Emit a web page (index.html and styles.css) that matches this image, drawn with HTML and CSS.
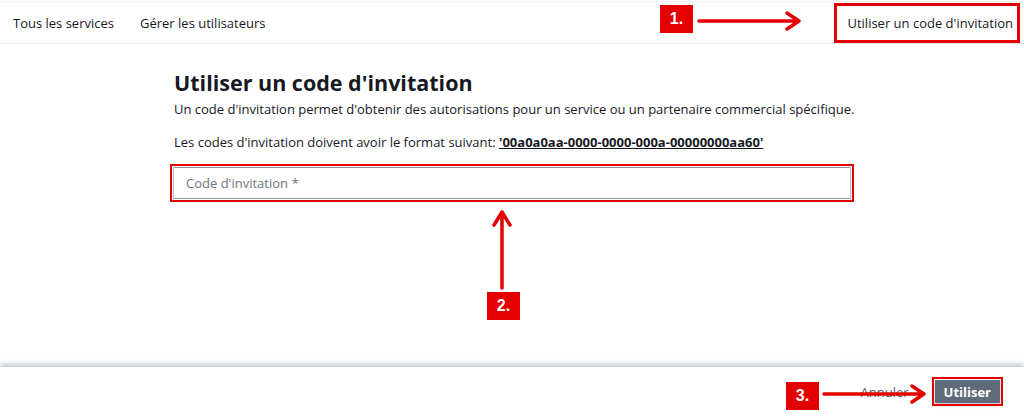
FILE: index.html
```html
<!DOCTYPE html>
<html lang="fr">
<head>
<meta charset="utf-8">
<title>Utiliser un code d'invitation</title>
<link rel="stylesheet" href="styles.css">
</head>
<body>
<header class="topnav">
  <a class="nav-link" href="#">Tous les services</a>
  <a class="nav-link" href="#">Gérer les utilisateurs</a>
  <a class="nav-link nav-link-active callout-box" href="#">Utiliser un code d'invitation</a>
</header>

<main class="content">
  <section class="panel">
    <h1 class="title">Utiliser un code d'invitation</h1>
    <p class="lead">Un code d'invitation permet d'obtenir des autorisations pour un service ou un partenaire commercial spécifique.</p>
    <p class="format">Les codes d'invitation doivent avoir le format suivant: <span class="format-code">'00a0a0aa-0000-0000-000a-00000000aa60'</span></p>
    <div class="field callout-field">
      <input class="field-input" type="text" placeholder="Code d'invitation *">
    </div>
  </section>
</main>

<footer class="actions">
  <a class="cancel" href="#">Annuler</a>
  <button class="primary callout-button" type="button">Utiliser</button>
</footer>

<!-- step markers -->
<div class="step step-1">1.</div>
<svg class="arrow arrow-1" width="112" height="24" viewBox="0 0 112 24">
  <path d="M4 12 H104 M92 4 L104 12 L92 20" />
</svg>

<svg class="arrow arrow-2" width="24" height="84" viewBox="0 0 24 84">
  <path d="M12 80 V4 M4 17 L12 4 L20 17" />
</svg>
<div class="step step-2">2.</div>

<div class="step step-3">3.</div>
<svg class="arrow arrow-3" width="112" height="24" viewBox="0 0 112 24">
  <path d="M4 12 H104 M92 4 L104 12 L92 20" />
</svg>
</body>
</html>
```

FILE: styles.css
```css
* {
  box-sizing: border-box;
}

html, body {
  height: 100%;
}

body {
  margin: 0;
  position: relative;
  display: flex;
  flex-direction: column;
  background: #ffffff;
  color: #16191f;
  font-family: "Open Sans", "Noto Sans", sans-serif;
  font-size: 13px;
}

/* top navigation */
.topnav {
  display: flex;
  align-items: center;
  height: 43px;
  margin-top: 1px;
  border-top: 1px solid #eef0f0;
  border-bottom: 1px solid #e6e9ea;
  padding-left: 13px;
  gap: 26px;
}

.nav-link {
  color: #16191f;
  text-decoration: none;
  font-size: 13px;
  line-height: 18px;
}

.nav-link-active {
  margin-left: auto;
  margin-right: 4px;
  align-self: stretch;
  display: flex;
  align-items: center;
  padding: 0 4px 0 10px;
}

.callout-box {
  border: 3px solid #e40000;
  margin-top: 1px;
  margin-bottom: 0;
}

/* main form */
.content {
  flex: 1;
  display: flex;
  justify-content: center;
}

.panel {
  width: 680px;
  padding-top: 24px;
  padding-left: 2px;
  font-size: 13px;
}

.title {
  margin: 0;
  font-size: 21.5px;
  line-height: 30px;
  font-weight: 700;
  color: #16191f;
}

.lead {
  margin: 1px 0 0;
  line-height: 20px;
  white-space: nowrap;
}

.format {
  margin: 13px 0 0;
  line-height: 20px;
  white-space: nowrap;
}

.format-code {
  font-weight: 700;
  text-decoration: underline;
}

.field {
  margin-top: 15px;
  margin-left: -1px;
  width: 678px;
}

.callout-field {
  outline: 2px solid #e40000;
  outline-offset: 1px;
}

.field-input {
  display: block;
  width: 100%;
  height: 32px;
  padding: 0 12px;
  border: 1px solid #b9c1c6;
  border-top-color: #8d99a4;
  border-bottom-color: #8d99a4;
  font-family: inherit;
  font-size: 13px;
  color: #16191f;
  background: #fff;
}

.field-input::placeholder {
  color: #6e7880;
}

/* bottom action bar */
.actions {
  height: 51px;
  display: flex;
  align-items: center;
  justify-content: flex-end;
  gap: 26px;
  padding-right: 24px;
  padding-bottom: 2px;
  background: #fff;
  box-shadow: 0 -3px 5px rgba(80, 92, 110, 0.35);
}

.cancel {
  color: #545b64;
  text-decoration: none;
  font-size: 13px;
}

.primary {
  height: 23px;
  padding: 0 9px;
  border: none;
  background: #5f6b7a;
  color: #fff;
  font-family: inherit;
  font-size: 13px;
  font-weight: 700;
  box-shadow: 0 2px 4px rgba(0, 0, 0, 0.25);
}

.callout-button {
  outline: 2px solid #e40000;
  outline-offset: 1px;
}

/* numbered step markers and arrows */
.step {
  position: absolute;
  width: 33px;
  height: 28px;
  background: #e40000;
  color: #fff;
  font-family: "Liberation Sans", Arial, sans-serif;
  font-weight: 700;
  font-size: 16px;
  line-height: 28px;
  text-align: center;
}

.step-1 { left: 660px; top: 5px; }
.step-2 { left: 487px; top: 292px; }
.step-3 { left: 786px; top: 382px; }

.arrow {
  position: absolute;
  overflow: visible;
}

.arrow path {
  fill: none;
  stroke: #e40000;
  stroke-width: 3.5;
  stroke-linecap: round;
  stroke-linejoin: round;
}

.arrow-1 { left: 695px; top: 9px; }
.arrow-2 { left: 490px; top: 208px; }
.arrow-3 { left: 820px; top: 382px; }
```
